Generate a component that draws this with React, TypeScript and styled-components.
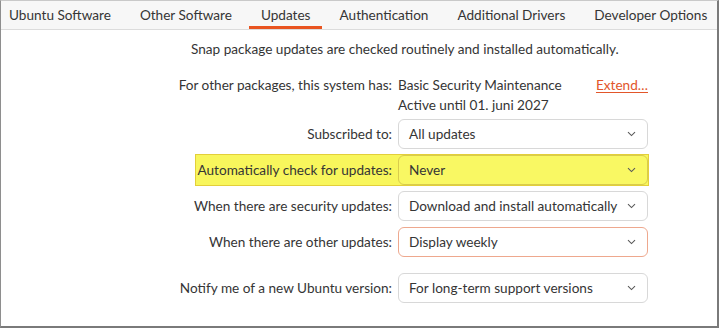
import styled, { createGlobalStyle } from "styled-components";

const GlobalStyle = createGlobalStyle`
  html, body {
    margin: 0;
    padding: 0;
    background: #ffffff;
  }
  body {
    font-family: Lato, "Noto Sans", sans-serif;
    font-size: 13.6px;
    color: #353535;
  }
`;

const Window = styled.div`
  box-sizing: border-box;
  width: 719px;
  height: 328px;
  background: #ffffff;
  border-left: 1px solid #8e8e8e;
  border-top: 1px solid #c9c9c9;
  border-right: 2px solid #7a7a7a;
  border-bottom: 2px solid #7a7a7a;
  display: flex;
  flex-direction: column;
`;

const TabBar = styled.div`
  display: flex;
  height: 28px;
  background: #f7f7f7;
  border-bottom: 1px solid #dcdcdc;
`;

const Tab = styled.div<{ $active?: boolean }>`
  display: flex;
  align-items: center;
  padding: 0 14px;
  margin-right: 1px;
  white-space: nowrap;
  color: #353535;
  background: ${(p) =>
    p.$active
      ? "linear-gradient(#e95420, #e95420) 2px 100% / calc(100% - 5px) 3px no-repeat"
      : "none"};

  &:first-child {
    padding-left: 8px;
  }
`;

const Content = styled.div`
  width: 472px;
  margin-left: 175px;
  display: flex;
  flex-direction: column;
  align-items: flex-end;
`;

const SnapNote = styled.div`
  align-self: flex-start;
  margin: 9px 0 0 15px;
  line-height: 20px;
  white-space: nowrap;
`;

const InfoRow = styled.div`
  display: flex;
  align-items: flex-start;
  gap: 6px;
  margin-top: 16px;
  margin-bottom: 4px;
  line-height: 20px;
`;

const Label = styled.div`
  white-space: nowrap;
  line-height: 20px;
`;

const InfoValue = styled.div`
  width: 250px;
  display: flex;
  flex-direction: column;
`;

const InfoLine = styled.div`
  display: flex;
  justify-content: space-between;
  white-space: nowrap;
`;

const ExtendLink = styled.a`
  color: #e2562a;
  text-decoration: underline;
  text-underline-offset: 2px;
  cursor: pointer;
`;

const FieldRow = styled.div<{ $highlight?: boolean; $gapTop?: number }>`
  display: flex;
  align-items: center;
  gap: 6px;
  margin-top: ${(p) => p.$gapTop ?? 6}px;
  padding-left: ${(p) => (p.$highlight ? "2px" : "0")};
  background: ${(p) => (p.$highlight ? "#f8f65c" : "transparent")};
  outline: ${(p) => (p.$highlight ? "1px solid #e3cf3a" : "none")};
`;

type Tone = "plain" | "marked" | "accent";

const Select = styled.div<{ $tone: Tone }>`
  box-sizing: border-box;
  width: 250px;
  height: 30px;
  padding: 0 11px 0 10px;
  display: flex;
  align-items: center;
  justify-content: space-between;
  border-radius: 6px;
  white-space: nowrap;
  background: ${(p) => (p.$tone === "marked" ? "#f9f863" : "#ffffff")};
  border: 1px solid
    ${(p) =>
      p.$tone === "marked" ? "#d9cc4c" : p.$tone === "accent" ? "#eea88e" : "#d8d8d8"};
`;

const Chevron = () => (
  <svg width="9" height="6" viewBox="0 0 9 6" fill="none">
    <path d="M1 1.2 L4.5 4.6 L8 1.2" stroke="#5a5a5a" strokeWidth="1.1" />
  </svg>
);

const tabs = [
  "Ubuntu Software",
  "Other Software",
  "Updates",
  "Authentication",
  "Additional Drivers",
  "Developer Options",
];

const fields: { label: string; value: string; tone: Tone; gapTop: number }[] = [
  { label: "Subscribed to:", value: "All updates", tone: "plain", gapTop: 0 },
  { label: "Automatically check for updates:", value: "Never", tone: "marked", gapTop: 6 },
  {
    label: "When there are security updates:",
    value: "Download and install automatically",
    tone: "plain",
    gapTop: 6,
  },
  { label: "When there are other updates:", value: "Display weekly", tone: "accent", gapTop: 6 },
  {
    label: "Notify me of a new Ubuntu version:",
    value: "For long-term support versions",
    tone: "plain",
    gapTop: 16,
  },
];

export default function App() {
  return (
    <>
      <GlobalStyle />
      <Window>
        <TabBar>
          {tabs.map((t) => (
            <Tab key={t} $active={t === "Updates"}>
              {t}
            </Tab>
          ))}
        </TabBar>
        <Content>
          <SnapNote>
            Snap package updates are checked routinely and installed automatically.
          </SnapNote>
          <InfoRow>
            <Label>For other packages, this system has:</Label>
            <InfoValue>
              <InfoLine>
                <span>Basic Security Maintenance</span>
                <ExtendLink>Extend…</ExtendLink>
              </InfoLine>
              <InfoLine>Active until 01. juni 2027</InfoLine>
            </InfoValue>
          </InfoRow>
          {fields.map((f) => (
            <FieldRow key={f.label} $highlight={f.tone === "marked"} $gapTop={f.gapTop}>
              <Label>{f.label}</Label>
              <Select $tone={f.tone}>
                <span>{f.value}</span>
                <Chevron />
              </Select>
            </FieldRow>
          ))}
        </Content>
      </Window>
    </>
  );
}
